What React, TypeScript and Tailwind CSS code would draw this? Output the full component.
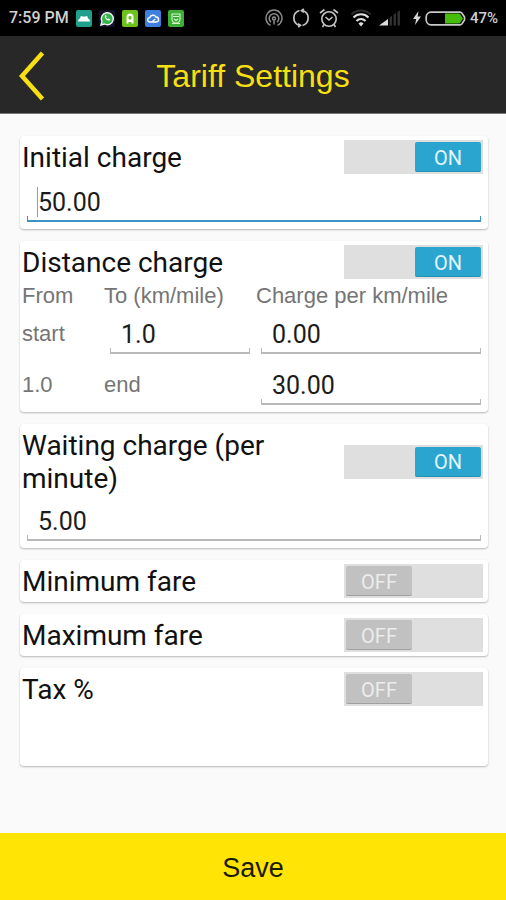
import { useState, type ReactNode } from "react";

function StatusBar() {
  return (
    <div className="flex h-9 items-center justify-between bg-black px-2 font-[Roboto,sans-serif] text-base font-medium text-[#d0d0d0]">
      <div className="flex items-center gap-[7px]">
        <span className="pl-px">7:59 PM</span>
        <svg width="16" height="17" viewBox="0 0 16 17" aria-hidden="true">
          <rect width="16" height="17" rx="2" fill="#20a08c" />
          <path d="M2 11.500h12l-.5-2-1.500-1-.8-2.500-1.700.6h-3L4.800 6 4 8.500l-1.500 1z" fill="#fff" />
        </svg>
        <svg width="16" height="17" viewBox="0 0 16 17" aria-hidden="true">
          <rect width="16" height="17" rx="2" fill="#14122a" />
          <path d="M2 15l1-3.500a6 6 0 1 1 2.500 2.500z" fill="#35b54a" stroke="#f2f2f2" strokeWidth="1.400" />
          <path d="M6 5.500c-.8 2.500 1.800 5.300 4.600 5.100l.6-1.300-1.700-.9-.8.7c-1-.5-1.500-1.100-1.800-1.900l.7-.7-.6-1.500z" fill="#fff" />
        </svg>
        <svg width="16" height="17" viewBox="0 0 16 17" aria-hidden="true">
          <rect width="16" height="17" rx="2" fill="#6cc31c" />
          <path d="M4.500 13.500V7a3.500 3.500 0 0 1 7 0v6.500H9.500V12h-3v1.500z" fill="#fff" />
          <rect x="6.500" y="6" width="3" height="3.500" rx="1" fill="#6cc31c" />
        </svg>
        <svg width="16" height="17" viewBox="0 0 16 17" aria-hidden="true">
          <rect width="16" height="17" rx="2" fill="#3f80dc" />
          <path d="M5 12a2.200 2.200 0 0 1-.2-4.400 3.300 3.300 0 0 1 6.100-.6 2.500 2.500 0 0 1 .3 5zM7.500 11.500L10.300 9" fill="none" stroke="#fff" strokeWidth="1.400" />
        </svg>
        <svg width="16" height="17" viewBox="0 0 16 17" aria-hidden="true">
          <rect width="16" height="17" rx="2" fill="#3fae35" />
          <path d="M4 4h8v5a4 4 0 0 1-8 0zM5 6.500h6M6 9l2 1.500L10 9M4 13.500h8" fill="none" stroke="#d6f2d0" strokeWidth="1.100" />
        </svg>
      </div>
      <div className="flex items-center">
        <svg width="18" height="20" viewBox="0 0 18 20" fill="none" stroke="#8c8c8c" strokeWidth="1.500" aria-hidden="true">
          <path d="M5.500 17.300a8 8 0 1 1 7 0" />
          <path d="M6 14.200a4.800 4.800 0 1 1 6 0" />
          <circle cx="9" cy="10.500" r="1.500" />
          <path d="M9 12.500v4" />
        </svg>
        <svg className="ml-2" width="20" height="20" viewBox="0 0 20 20" fill="none" stroke="#c4c4c4" strokeWidth="1.700" aria-hidden="true">
          <path d="M11.500 2.500a7.800 7.800 0 0 1 0 15M8.500 17.500a7.800 7.800 0 0 1 0-15" />
          <path d="M13 4.200l-2.500-1.500L12.800.8M7 15.800l2.500 1.500-2.300 1.900" />
        </svg>
        <svg className="ml-2" width="20" height="20" viewBox="0 0 20 20" fill="none" stroke="#c4c4c4" strokeWidth="1.600" aria-hidden="true">
          <circle cx="10" cy="11" r="7.200" />
          <path d="M6.500 9l3.500 3 3.500-3M1 5l4.500-3.500M19 5l-4.500-3.500M5 16.500L3.500 19M15 16.500l1.500 2.500" />
        </svg>
        <svg className="ml-3" width="20" height="18" viewBox="0 0 20 18" fill="none" stroke="#e0e0e0" strokeWidth="2" aria-hidden="true">
          <path d="M.5 5.500a13.300 13.300 0 0 1 19 0" stroke="#2c2c2c" />
          <path d="M2.500 8.500a10.500 10.500 0 0 1 15 0M5.500 12a6.300 6.300 0 0 1 9 0" />
          <path d="M7.500 14.500a3.500 3.500 0 0 1 5 0L10 17.500z" fill="#e0e0e0" stroke="none" />
        </svg>
        <svg className="ml-2" width="22" height="16" viewBox="0 0 22 16" aria-hidden="true">
          <path d="M0 15.500L9 9v6.500z" fill="#dcdcdc" />
          <path d="M10.500 15.500V7.500L13 5.700v9.800zM14.500 15.500V4.700L17 3v12.500zM18.500 15.500V2L21 .3v15.200z" fill="#303030" />
        </svg>
        <svg className="ml-3" width="8" height="14" viewBox="0 0 8 14" aria-hidden="true">
          <path d="M5.500 0L0 8h3.200L2 14l6-8.500H4.600z" fill="#d8d8d8" />
        </svg>
        <svg className="ml-1" width="41" height="15" viewBox="0 0 41 15" aria-hidden="true">
          <path d="M20 2.500h14.500L38 7.500l-3.500 5H20z" fill="#46bd0a" />
          <path d="M6 1.200h29a3 3 0 0 1 2.500 1.800l2 3v3l-2 3a3 3 0 0 1-2.500 1.800H6A5 5 0 0 1 1.200 9V6A5 5 0 0 1 6 1.200z" fill="none" stroke="#c8c8c8" strokeWidth="1.700" />
        </svg>
        <span className="ml-1 text-[15px]">47%</span>
      </div>
    </div>
  );
}

function Toggle({ id, initial }: { id: string; initial: boolean }) {
  const [on, setOn] = useState(initial);
  return (
    <label
      className={`relative flex h-[34px] w-[139px] shrink-0 cursor-pointer bg-[#dfdfdf] p-0.5 ${on ? "justify-end" : "justify-start"}`}
    >
      <input
        id={id}
        type="checkbox"
        role="switch"
        className="sr-only"
        checked={on}
        onChange={(e) => setOn(e.target.checked)}
      />
      <span
        className={`flex w-[66px] items-center justify-center rounded-xs border-b pt-0.5 font-[Roboto,sans-serif] text-[20px] leading-none ${
          on ? "border-[#2392b8] bg-[#2aa5cf] text-[#e4f6fc]" : "border-[#a0a0a0] bg-[#c1c1c1] text-[#ececec]"
        }`}
      >
        {on ? "ON" : "OFF"}
      </span>
    </label>
  );
}

function Field({ label, value, active = false }: { label: string; value: string; active?: boolean }) {
  return (
    <div>
      <div className="flex h-7 items-center pl-[11px]">
        {active && <span className="-ml-px h-[30px] w-px bg-[#9a9a9a]" />}
        <input
          type="text"
          inputMode="decimal"
          aria-label={label}
          defaultValue={value}
          className="h-7 w-full min-w-0 bg-transparent p-0 pt-0.5 font-[Roboto,sans-serif] text-[25px] leading-7 text-[#1c1c1c] outline-none"
        />
      </div>
      <div className={`h-1.5 border-x border-b-2 ${active ? "border-[#3b94c6]" : "border-[#b9b9b9]"}`} />
    </div>
  );
}

function Card({
  id,
  title,
  on = false,
  className = "",
  children,
}: {
  id: string;
  title: string;
  on?: boolean;
  className?: string;
  children?: ReactNode;
}) {
  return (
    <section className={`rounded-sm bg-white shadow-[0_1px_2px_rgba(0,0,0,0.28)] ${className}`}>
      <div className="flex items-center justify-between gap-8 py-1 pl-0.5 pr-[5px]">
        <label htmlFor={id} className="pt-px font-[Roboto,sans-serif] text-[28px] leading-[33px] text-[#111]">
          {title}
        </label>
        <Toggle id={id} initial={on} />
      </div>
      {children}
    </section>
  );
}

export default function App() {
  return (
    <div className="flex min-h-screen flex-col bg-[#fafafa] font-['Liberation_Sans',Arial,sans-serif]">
      <StatusBar />
      <header className="grid h-[78px] grid-cols-[64px_1fr_64px] items-center border-b border-[#777] bg-[#282828] text-[#f6df12]">
        <button type="button" aria-label="Back" className="flex h-full items-center pl-[18px] pt-0.5">
          <svg width="28" height="52" viewBox="0 0 28 52" fill="none" stroke="currentColor" strokeWidth="4.500" aria-hidden="true">
            <path d="M24.500 3L4 26l20.500 23" />
          </svg>
        </button>
        <h1 className="pt-0.5 text-center text-[32px] leading-10">Tariff Settings</h1>
      </header>

      <main className="flex flex-1 flex-col gap-3 pb-6 pl-5 pr-[18px] pt-[22px]">
        <Card id="initial" title="Initial charge" on className="pb-[7px]">
          <div className="mx-[7px] mt-2.5">
            <Field label="Initial charge amount" value="50.00" active />
          </div>
        </Card>

        <Card id="distance" title="Distance charge" on className="pb-0.5">
          <table className="w-full table-fixed text-left text-[22px] leading-[25px] text-[#757575]">
            <colgroup>
              <col className="w-[84px]" />
              <col className="w-[152px]" />
              <col />
            </colgroup>
            <thead>
              <tr>
                <th className="p-0 pl-0.5 font-normal">From</th>
                <th className="whitespace-nowrap p-0 font-normal">To (km/mile)</th>
                <th className="whitespace-nowrap p-0 font-normal">Charge per km/mile</th>
              </tr>
            </thead>
            <tbody>
              <tr>
                <td className="p-0 pl-0.5">start</td>
                <td className="px-1.5 pb-[5px] pt-3">
                  <Field label="To distance" value="1.0" />
                </td>
                <td className="pb-[5px] pl-[5px] pr-[7px] pt-3">
                  <Field label="Charge from start" value="0.00" />
                </td>
              </tr>
              <tr>
                <td className="p-0 pl-0.5">1.0</td>
                <td className="p-0">end</td>
                <td className="pb-[5px] pl-[5px] pr-[7px] pt-3">
                  <Field label="Charge to end" value="30.00" />
                </td>
              </tr>
            </tbody>
          </table>
        </Card>

        <Card id="waiting" title="Waiting charge (per minute)" on className="pb-[7px]">
          <div className="mx-[7px] mt-2">
            <Field label="Waiting charge amount" value="5.00" />
          </div>
        </Card>

        <Card id="minimum" title="Minimum fare" />
        <Card id="maximum" title="Maximum fare" />
        <Card id="tax" title="Tax %" className="pb-14" />
      </main>

      <button type="button" className="h-[67px] w-full bg-[#ffe405] pt-1 text-[27px] text-[#1a1a05]">
        Save
      </button>
    </div>
  );
}
